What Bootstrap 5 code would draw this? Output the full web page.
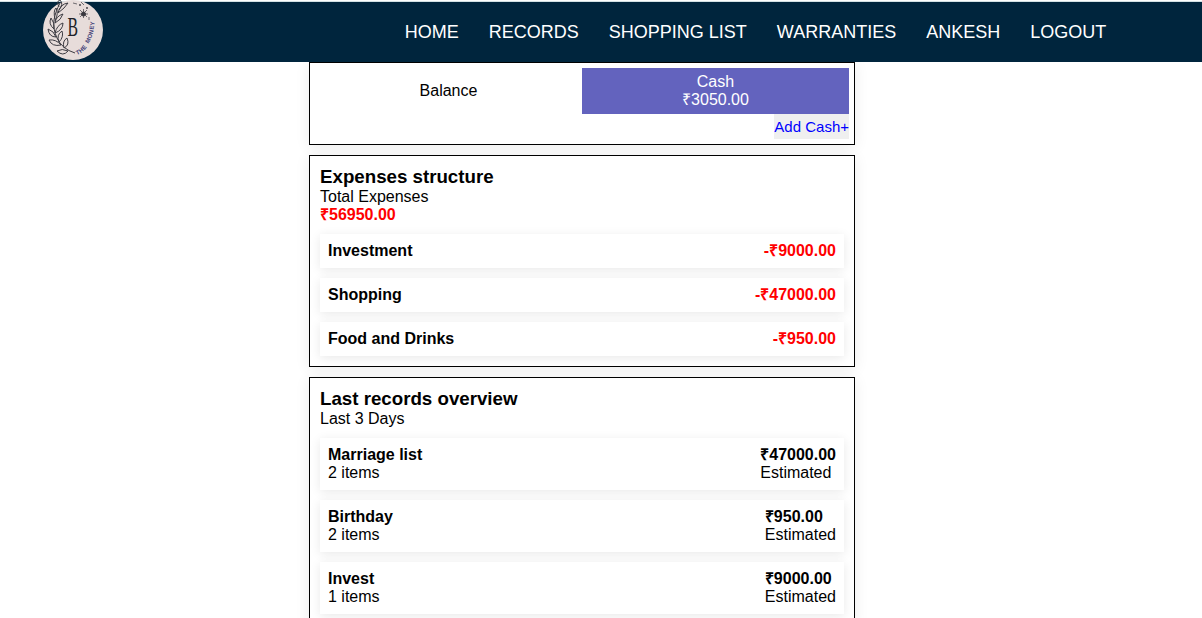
<!DOCTYPE html>
<html lang="en">
<head>
<meta charset="utf-8">
<meta name="viewport" content="width=device-width, initial-scale=1">
<title>Dashboard</title>
<link href="https://cdn.jsdelivr.net/npm/bootstrap@5.3.0/dist/css/bootstrap.min.css" rel="stylesheet">
<style>
body{font:16px/18px "Liberation Sans",Arial,sans-serif;color:#000;background:#fff;height:100vh;overflow:hidden}
.top-nav{height:62px;background:linear-gradient(#fdfefe 0 1px,#d3e0e4 1px 2px,#00253d 2px);padding:0 95.8px 0 43px;z-index:2}
.top-nav .nav{gap:30px;padding-top:2px}
.top-nav .nav-link{color:#fff;font-size:18px;line-height:20px}
.logo{width:60px;height:60px}
.panels{width:546px;margin-left:309px;gap:10px}
.panel{background:#fff;border:1px solid #000;box-shadow:0 2px 14px rgba(0,0,0,.08)}
.panel-tight{padding:5px}
.panel-body{padding:10px}
.panel h3{font-size:18.72px;line-height:22px;font-weight:700}
.entries{gap:10px;margin-top:10px}
.entry{padding:8px;background:#fff;box-shadow:0 2px 10px rgba(0,0,0,.09)}
.cash{background:#6363be;color:#fff;padding:5px}
.add-cash{background:#efefef;color:#00f;font-size:15px;line-height:25px;border:0;padding:0}
.spent{color:#f00}
</style>
</head>
<body>
<nav class="top-nav navbar flex-nowrap align-items-stretch position-relative">
  <a href="#" class="d-block logo">
    <svg class="d-block" width="60" height="60" viewBox="0 0 60 60" fill="none" stroke="#3c3b42" stroke-width="1">
      <defs><path id="ringLow" d="M34 55Q40 53 44 46.500"/><path id="ringHigh" d="M45.500 43.500Q51 36 51.500 20"/></defs>
      <circle cx="30" cy="30" r="30" fill="#e7dcda" stroke="none"/>
      <path d="M17 3C11 15 8 25 14 38Q19 49 32 53M16 7Q13 1 17 0Q21 4 16 10M15 13Q22 8 25 3Q17 4 15 13M12 19Q10 11 13 8Q16 13 12 21M12 23Q18 20 20 14Q13 16 12 23M11 29Q5 24 8 18Q12 23 11 29M12 33Q20 30 20 23Q14 25 12 33M13 37Q6 37 5 29Q11 31 13 37M16 42Q13 35 19 31Q21 37 16 42M18 45Q9 47 6 40Q13 39 18 45M21 48Q19 41 24 38Q27 45 21 48M25 51Q20 57 14 51Q19 48 25 51"/>
      <path d="M37 10l7 7M44 10l-7 7M36 14h9M40.500 9v9M30 3l4 1M38 2l3 3M46 17v3" stroke-width=".7"/>
      <circle cx="40.500" cy="14" r="2" fill="#38363d"/>
      <circle cx="37" cy="5" r=".9" fill="#38363d" stroke="none"/><circle cx="44" cy="8" r=".9" fill="#38363d" stroke="none"/>
      <text x="24.500" y="36" fill="#201f28" stroke="none" font-family="Liberation Serif,serif" font-size="27" textLength="10.500" lengthAdjust="spacingAndGlyphs">B</text>
      <g fill="#444178" stroke="none" font-family="Liberation Sans,sans-serif" font-size="6" font-weight="700">
        <text><textPath href="#ringLow" textLength="13">THE</textPath></text>
        <text><textPath href="#ringHigh" textLength="23">MONEY</textPath></text>
      </g>
    </svg>
  </a>
  <div class="nav flex-nowrap align-items-center">
    <a class="nav-link p-0" href="#">HOME</a>
    <a class="nav-link p-0" href="#">RECORDS</a>
    <a class="nav-link p-0" href="#">SHOPPING LIST</a>
    <a class="nav-link p-0" href="#">WARRANTIES</a>
    <a class="nav-link p-0" href="#">ANKESH</a>
    <a class="nav-link p-0" href="#">LOGOUT</a>
  </div>
</nav>
<main class="panels d-flex flex-column">
  <section class="panel panel-tight">
    <div class="row g-0 text-center align-items-center">
      <div class="col-6">Balance</div>
      <div class="col-6 cash"><div>Cash</div><div>₹3050.00</div></div>
    </div>
    <div class="d-flex justify-content-end"><button class="add-cash">Add Cash+</button></div>
  </section>
  <section class="panel panel-body">
    <h3 class="m-0">Expenses structure</h3>
    <div>Total Expenses</div>
    <div class="fw-bold spent">₹56950.00</div>
    <div class="entries d-flex flex-column">
      <div class="entry d-flex justify-content-between fw-bold"><span>Investment</span><span class="spent">-₹9000.00</span></div>
      <div class="entry d-flex justify-content-between fw-bold"><span>Shopping</span><span class="spent">-₹47000.00</span></div>
      <div class="entry d-flex justify-content-between fw-bold"><span>Food and Drinks</span><span class="spent">-₹950.00</span></div>
    </div>
  </section>
  <section class="panel panel-body">
    <h3 class="m-0">Last records overview</h3>
    <div>Last 3 Days</div>
    <div class="entries d-flex flex-column">
      <div class="entry d-flex justify-content-between"><div><div class="fw-bold">Marriage list</div><div>2 items</div></div><div><div class="fw-bold">₹47000.00</div><div>Estimated</div></div></div>
      <div class="entry d-flex justify-content-between"><div><div class="fw-bold">Birthday</div><div>2 items</div></div><div><div class="fw-bold">₹950.00</div><div>Estimated</div></div></div>
      <div class="entry d-flex justify-content-between"><div><div class="fw-bold">Invest</div><div>1 items</div></div><div><div class="fw-bold">₹9000.00</div><div>Estimated</div></div></div>
    </div>
  </section>
</main>
<script src="https://cdn.jsdelivr.net/npm/bootstrap@5.3.0/dist/js/bootstrap.bundle.min.js"></script>
</body>
</html>
